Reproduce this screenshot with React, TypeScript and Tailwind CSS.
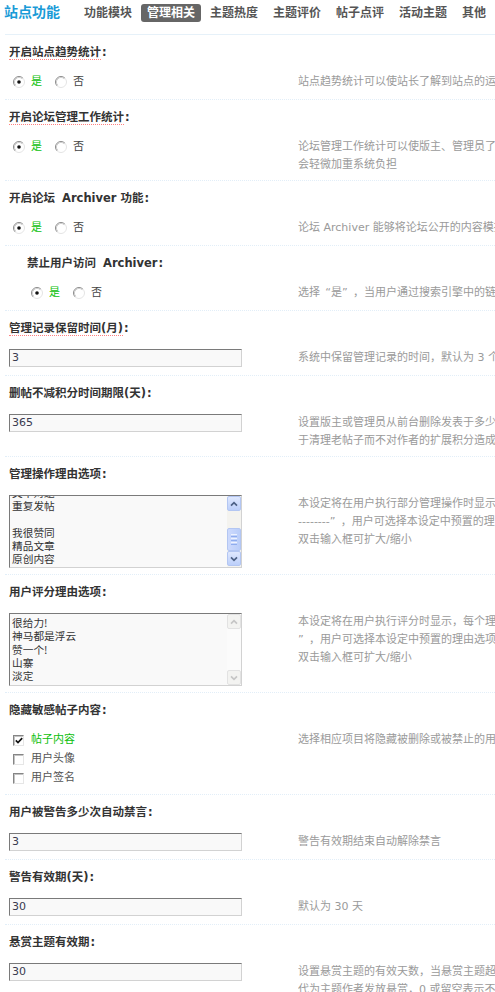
import React from "react";

const FONT = "font-['DejaVu_Sans','Noto_Sans_CJK_SC',sans-serif]";

function Radio({ checked }: { checked: boolean }) {
  return (
    <svg width="12" height="12" viewBox="0 0 12 12" className="shrink-0">
      <circle cx="6" cy="6" r="5.5" fill="#fff" />
      <path d="M2.11 9.89 A5.5 5.5 0 0 1 9.89 2.11" fill="none" stroke="#8a8a8a" strokeWidth="1" />
      <path d="M9.89 2.11 A5.5 5.5 0 0 1 2.11 9.89" fill="none" stroke="#e4e4e4" strokeWidth="1" />
      <path d="M2.82 9.18 A4.5 4.5 0 0 1 9.18 2.82" fill="none" stroke="#cfcfcf" strokeWidth="1" />
      {checked && <circle cx="6" cy="6" r="1.8" fill="#111" />}
    </svg>
  );
}

function Checkbox({ checked }: { checked: boolean }) {
  return (
    <div className="w-[11px] h-[11px] shrink-0 border border-t-[#858585] border-l-[#858585] border-r-[#e6e6e6] border-b-[#e6e6e6] bg-white shadow-[inset_1px_1px_0_#c4c4c4] flex items-center justify-center">
      {checked && (
        <svg width="8" height="7" viewBox="0 0 8 7">
          <path d="M0.8 3.4 L3 5.6 L7.2 1.2" fill="none" stroke="#111" strokeWidth="1.7" />
        </svg>
      )}
    </div>
  );
}

const OQ = () => <span className="inline-block w-[11px] text-right">“</span>;
const CQ = () => <span className="inline-block w-[11px] text-left">”</span>;

function RadioRow() {
  return (
    <div className="flex items-center h-[18px] ml-[4px] text-[11px]">
      <Radio checked />
      <span className="ml-[6px] text-[#0cbf0c]">是</span>
      <span className="ml-[13px] flex items-center">
        <Radio checked={false} />
      </span>
      <span className="ml-[6px] text-[#444]">否</span>
    </div>
  );
}

function TextBox({ value }: { value: string }) {
  return (
    <div className="w-[233px] h-[18px] border border-t-[#7a7a7a] border-l-[#7a7a7a] border-r-[#d2d2d2] border-b-[#d2d2d2] bg-[#f9f9f9] pl-[2px] text-[11px] leading-[16px] text-[#3a3a50]">
      {value}
    </div>
  );
}

function ArrowUp({ color }: { color: string }) {
  return (
    <svg width="8" height="6" viewBox="0 0 8 6">
      <path d="M1 4.6 L4 1.6 L7 4.6" fill="none" stroke={color} strokeWidth="1.7" />
    </svg>
  );
}
function ArrowDown({ color }: { color: string }) {
  return (
    <svg width="8" height="6" viewBox="0 0 8 6">
      <path d="M1 1.4 L4 4.4 L7 1.4" fill="none" stroke={color} strokeWidth="1.7" />
    </svg>
  );
}

function TextArea({ lines, scrolled }: { lines: string[]; scrolled: boolean }) {
  return (
    <div className="w-[233px] h-[73px] border border-t-[#7a7a7a] border-l-[#7a7a7a] border-r-[#d2d2d2] border-b-[#d2d2d2] bg-[#f9f9f9] flex overflow-hidden">
      <div className="flex-1 min-w-0 overflow-hidden pl-[2px] text-[10.7px] leading-[13.3px] text-[#333] font-['Noto_Sans_CJK_SC','DejaVu_Sans',sans-serif]">
        <div className={scrolled ? "-mt-[50px]" : "pt-[2px]"}>
          {lines.map((l, i) => (
            <div key={i} className="whitespace-nowrap h-[13.3px]">
              {l === "" ? "\u00a0" : l}
            </div>
          ))}
        </div>
      </div>
      {scrolled ? (
        <div className="w-[14px] shrink-0 flex flex-col bg-[#f4f3ef]">
          <div className="h-[15px] rounded-[2px] border border-[#b3c6f2] bg-linear-to-b from-[#dfe8fe] to-[#bccffa] flex items-center justify-center">
            <ArrowUp color="#4d6185" />
          </div>
          <div className="h-[17px]" />
          <div className="h-[23px] rounded-[2px] border border-[#b3c6f2] bg-linear-to-r from-[#cddafd] to-[#b9cdf9] flex flex-col items-center justify-center gap-[1px]">
            <div className="w-[6px] h-px bg-[#eef3fe]" />
            <div className="w-[6px] h-px bg-[#8fadee]" />
            <div className="w-[6px] h-px bg-[#eef3fe]" />
            <div className="w-[6px] h-px bg-[#8fadee]" />
            <div className="w-[6px] h-px bg-[#eef3fe]" />
            <div className="w-[6px] h-px bg-[#8fadee]" />
          </div>
          <div className="h-[15px] rounded-[2px] border border-[#b3c6f2] bg-linear-to-b from-[#dfe8fe] to-[#bccffa] flex items-center justify-center">
            <ArrowDown color="#4d6185" />
          </div>
        </div>
      ) : (
        <div className="w-[14px] shrink-0 flex flex-col justify-between bg-[#fbfbfb]">
          <div className="h-[15px] rounded-[2px] border border-[#e2e2e2] bg-[#f3f3f1] flex items-center justify-center">
            <ArrowUp color="#c6c6c6" />
          </div>
          <div className="h-[15px] rounded-[2px] border border-[#e2e2e2] bg-[#f3f3f1] flex items-center justify-center">
            <ArrowDown color="#c6c6c6" />
          </div>
        </div>
      )}
    </div>
  );
}

function Section({
  title,
  underline,
  indent,
  left,
  desc,
}: {
  title: React.ReactNode;
  underline?: boolean;
  indent?: boolean;
  left: React.ReactNode;
  desc: React.ReactNode[];
}) {
  return (
    <div className="border-b border-dotted border-[#e2eef8]">
      <div className={"h-[34px] flex items-center " + (indent ? "pl-[22px]" : "pl-[4px]")}>
        <span className="text-[11.5px] font-bold text-[#333] leading-[13px] whitespace-nowrap">
          <span className={underline ? "border-b border-dotted border-b-[#ff8080]" : ""}>{title}</span>
          <span className="ml-[1px]">:</span>
        </span>
      </div>
      <div className="flex pt-[4px] pb-[6px]">
        <div className={"w-[293px] shrink-0 min-h-[20px] " + (indent ? "pl-[22px]" : "pl-[4px]")}>
          {left}
        </div>
        <div className="flex-1 min-w-0 overflow-hidden text-[11px] leading-[18px] text-[#9a9a9a]">
          {desc.map((d, i) => (
            <div key={i} className="whitespace-nowrap">
              {d}
            </div>
          ))}
        </div>
      </div>
    </div>
  );
}

const tabs = ["功能模块", "管理相关", "主题热度", "主题评价", "帖子点评", "活动主题", "其他"];

export default function App() {
  return (
    <div className={"w-[495px] h-screen overflow-hidden bg-white " + FONT}>
      <div className="ml-[5px] h-[35px] border-b border-[#e6f1f9] flex items-start">
        <div className="-ml-[1px] mt-[3px] text-[14px] leading-[18px] font-bold text-[#1a9bd7] whitespace-nowrap">
          站点功能
        </div>
        <div className="flex gap-[3px] ml-[18px] mt-[4px]">
          {tabs.map((t) => (
            <div
              key={t}
              className={
                "px-[6px] h-[18px] leading-[18px] text-[12px] font-bold rounded-[3px] whitespace-nowrap " +
                (t === "管理相关" ? "bg-[#666] text-white" : "text-[#555]")
              }
            >
              {t}
            </div>
          ))}
        </div>
      </div>

      <div className="ml-[5px]">
        <Section
          title="开启站点趋势统计"
          underline
          left={<RadioRow />}
          desc={["站点趋势统计可以使站长了解到站点的运行状况，注意：开启此项功能会轻微加重系统负担"]}
        />
        <Section
          title="开启论坛管理工作统计"
          underline
          left={<RadioRow />}
          desc={["论坛管理工作统计可以使版主、管理员了解论坛版主等的工作状况，注意：开启此项功能", "会轻微加重系统负担"]}
        />
        <Section
          title={
            <>
              开启论坛<span className="ml-[7px] mr-[4px]">Archiver</span>功能
            </>
          }
          left={<RadioRow />}
          desc={["论坛 Archiver 能够将论坛公开的内容模拟成静态页面，以便搜索引擎获取其中的内容"]}
        />
        <Section
          indent
          title={
            <>
              禁止用户访问<span className="ml-[7px]">Archiver</span>
            </>
          }
          left={<RadioRow />}
          desc={[
            <>
              选择<OQ />是<CQ />，当用户通过搜索引擎中的链接访问 Archiver 页面时自动跳转到论坛页面
            </>,
          ]}
        />
        <Section
          title="管理记录保留时间(月)"
          underline
          left={<TextBox value="3" />}
          desc={["系统中保留管理记录的时间，默认为 3 个月"]}
        />
        <Section
          title="删帖不减积分时间期限(天)"
          left={<TextBox value="365" />}
          desc={[
            "设置版主或管理员从前台删除发表于多少天以前的帖子时，不更新用户的扩展积分，可用",
            "于清理老帖子而不对作者的扩展积分造成影响，0 为不限制",
          ]}
        />
        <Section
          title="管理操作理由选项"
          left={
            <TextArea
              scrolled
              lines={["广告/SPAM", "恶意灌水", "违规内容", "文不对题", "重复发帖", "", "我很赞同", "精品文章", "原创内容"]}
            />
          }
          desc={[
            <>
              本设定将在用户执行部分管理操作时显示，每个理由一行，如果空行则显示一行分隔符<OQ />
            </>,
            <>
              --------<CQ />，用户可选择本设定中预置的理由选项或自己输入
            </>,
            "双击输入框可扩大/缩小",
          ]}
        />
        <Section
          title="用户评分理由选项"
          left={<TextArea scrolled={false} lines={["很给力!", "神马都是浮云", "赞一个!", "山寨", "淡定"]} />}
          desc={[
            "本设定将在用户执行评分时显示，每个理由一行，如果空行则显示一行分隔符",
            <>
              <CQ />，用户可选择本设定中预置的理由选项或自己输入
            </>,
            "双击输入框可扩大/缩小",
          ]}
        />
        <Section
          title="隐藏敏感帖子内容"
          left={
            <div className="ml-[4px] text-[11px]">
              {[
                { l: "帖子内容", c: true },
                { l: "用户头像", c: false },
                { l: "用户签名", c: false },
              ].map((o) => (
                <div key={o.l} className="h-[19px] flex items-center">
                  <Checkbox checked={o.c} />
                  <span className={"ml-[7px] " + (o.c ? "text-[#0cbf0c]" : "text-[#555]")}>{o.l}</span>
                </div>
              ))}
            </div>
          }
          desc={["选择相应项目将隐藏被删除或被禁止的用户所发表的相应内容"]}
        />
        <Section
          title="用户被警告多少次自动禁言"
          left={<TextBox value="3" />}
          desc={["警告有效期结束自动解除禁言"]}
        />
        <Section title="警告有效期(天)" left={<TextBox value="30" />} desc={["默认为 30 天"]} />
        <Section
          title="悬赏主题有效期"
          left={<TextBox value="30" />}
          desc={[
            "设置悬赏主题的有效天数，当悬赏主题超过有效期后，系统会自动将悬赏积分",
            "代为主题作者发放悬赏，0 或留空表示不限制",
          ]}
        />
      </div>
    </div>
  );
}
